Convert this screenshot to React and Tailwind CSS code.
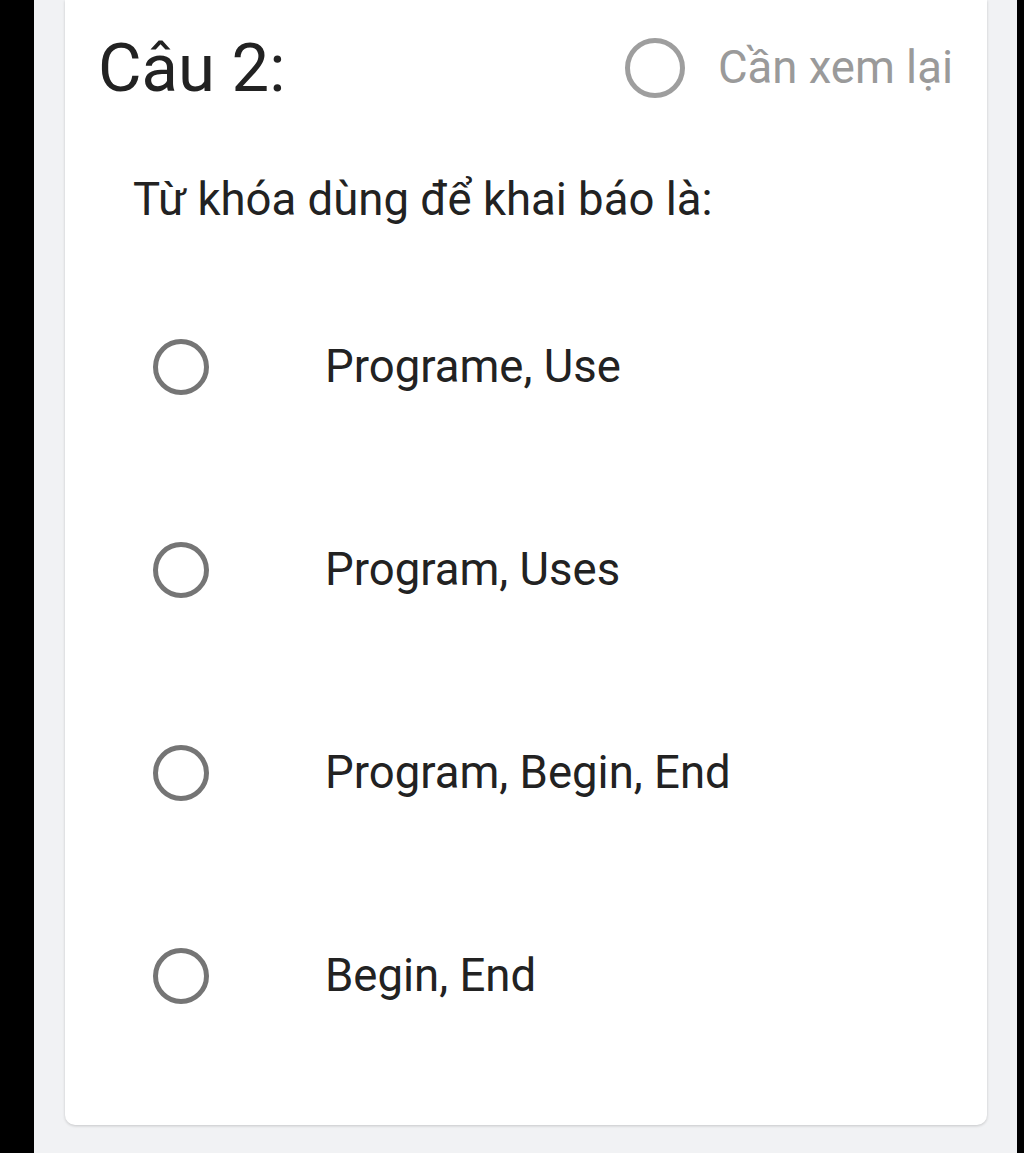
export default function App() {
  const options = ["Programe, Use", "Program, Uses", "Program, Begin, End", "Begin, End"];
  return (
    <div className="flex h-[1153px] w-[1024px] bg-black overflow-hidden" style={{ fontFamily: "Roboto, 'Noto Sans', sans-serif" }}>
      <div className="w-[34px] shrink-0 bg-black" />
      <div className="flex-1 bg-[#f1f2f4] pl-[31px] pr-[30px] flex flex-col">
        <div className="h-[1125px] bg-white rounded-b-[10px] shadow-[0_1px_3px_rgba(0,0,0,0.18)] flex flex-col">
          <div className="flex items-center justify-between pl-[33px] pr-[34px] pt-[28px]">
            <span className="text-[67px] leading-[80px] text-[#222]">Câu 2:</span>
            <div className="flex items-center gap-[33px]">
              <span className="block w-[60px] h-[60px] rounded-full border-[5px] border-[#9e9e9e]" />
              <span className="text-[45.5px] leading-[60px] text-[#9a9a9a]">Cần xem lại</span>
            </div>
          </div>
          <div className="pl-[68px] mt-[62px] text-[45.5px] leading-[60px] text-[#222]">Từ khóa dùng để khai báo là:</div>
          <div className="flex flex-col mt-[35px]">
            {options.map((o) => (
              <div key={o} className="flex items-center h-[203px] pl-[88px]">
                <span className="block w-[56px] h-[56px] rounded-full border-[5px] border-[#757575] shrink-0" />
                <span className="ml-[116px] text-[45.5px] leading-[60px] text-[#222]">{o}</span>
              </div>
            ))}
          </div>
        </div>
      </div>
      <div className="w-[7px] shrink-0 bg-black" />
    </div>
  );
}
